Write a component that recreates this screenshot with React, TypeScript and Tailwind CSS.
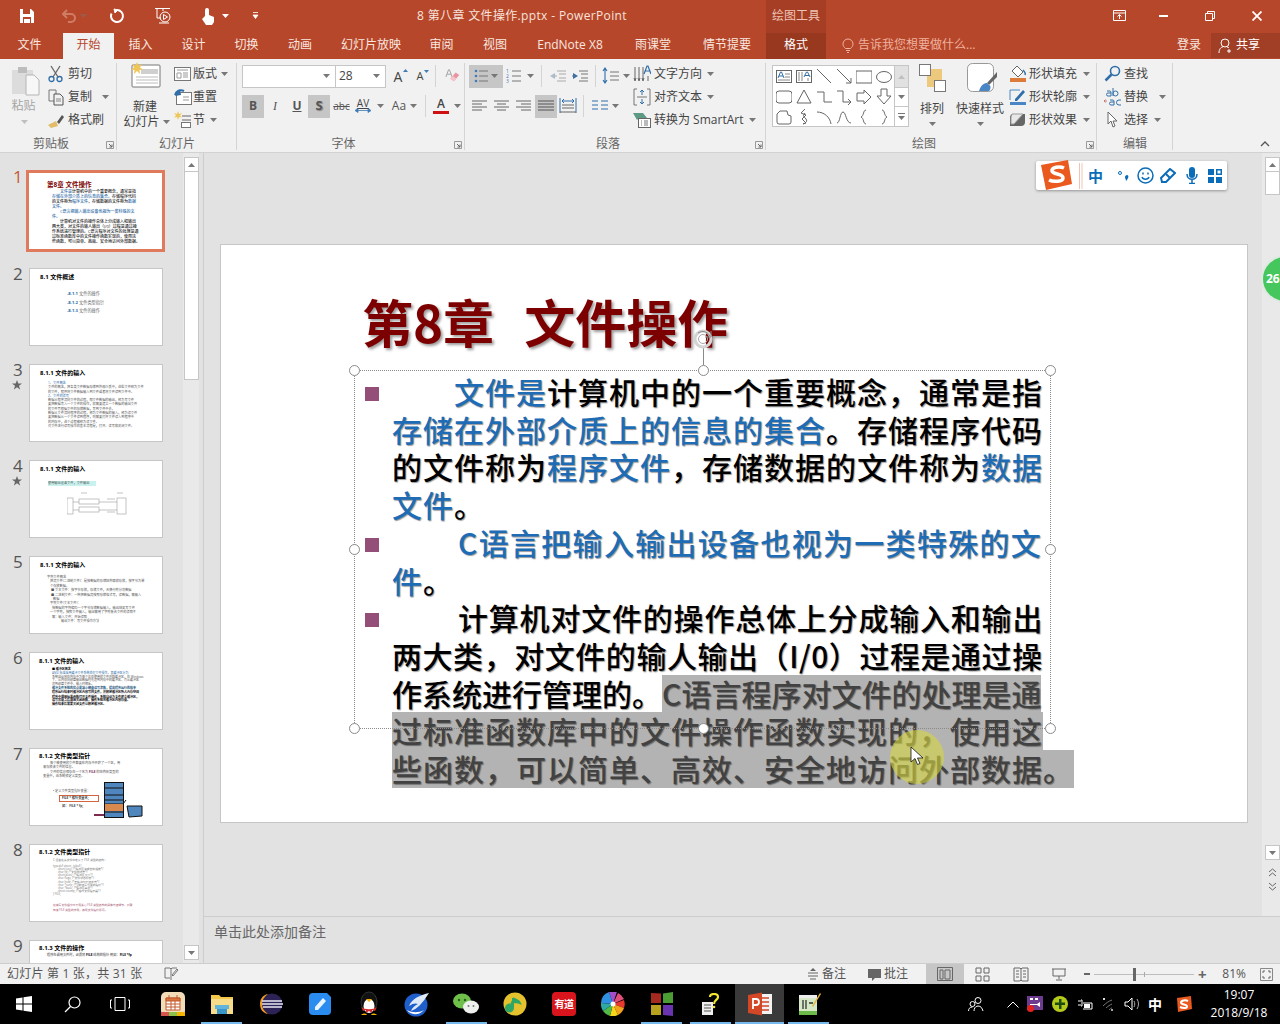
import type { ReactNode } from 'react';

const tabs = [
  { label: '插入', w: 'w-[53px]' },
  { label: '设计', w: 'w-[53px]' },
  { label: '切换', w: 'w-[53px]' },
  { label: '动画', w: 'w-[54px]' },
  { label: '幻灯片放映', w: 'w-[88px]' },
  { label: '审阅', w: 'w-[53px]' },
  { label: '视图', w: 'w-[54px]' },
  { label: 'EndNote X8', w: 'w-[96px]' },
  { label: '雨课堂', w: 'w-[70px]' },
  { label: '情节提要', w: 'w-[78px]' },
];

// small dropdown triangle used all over the ribbon
function Caret({ className = '' }: { className?: string }) {
  return (
    <svg width="7" height="4" viewBox="0 0 7 4" className={`shrink-0 ${className}`}>
      <path d="M0 0h7L3.5 4z" fill="#777" />
    </svg>
  );
}

function Launcher() {
  return (
    <svg width="8" height="8" viewBox="0 0 8 8" className="absolute right-[3px] bottom-[4px]">
      <path d="M.5 7.5V.5h7v7z" fill="none" stroke="#999" />
      <path d="M3 3l3 3M6 3.5V6H3.5" fill="none" stroke="#666" />
    </svg>
  );
}

function Group({ w, label, children, launcher }: { w: string; label: string; children: ReactNode; launcher?: boolean }) {
  return (
    <div className={`${w} h-[94px] shrink-0 flex flex-col relative`}>
      <div className="flex-1 flex min-h-0 pt-[3px]">{children}</div>
      <div className={`h-[19px] leading-[19px] text-center text-[12px] text-[#666] ${launcher ? 'pr-[15px]' : ''}`}>{label}</div>
      {launcher && <Launcher />}
      <div className="absolute right-0 top-[4px] bottom-[3px] w-px bg-[#d4d4d4]" />
    </div>
  );
}

function Row({ icon, text, caret, gap = 'gap-[3px]', caretClass = 'ml-[5px]' }: { icon: ReactNode; text: string; caret?: boolean; gap?: string; caretClass?: string }) {
  return (
    <div className={`h-[23px] flex items-center whitespace-nowrap text-[12px] text-[#444] ${gap}`}>
      <span className="w-[18px] h-[18px] flex items-center justify-center shrink-0">{icon}</span>
      <span>{text}</span>
      {caret && <Caret className={caretClass} />}
    </div>
  );
}

function TopIcon({ children, className = '' }: { children: ReactNode; className?: string }) {
  return <svg viewBox="0 0 18 18" width="18" height="18" fill="none" className={`shrink-0 ${className}`}>{children}</svg>;
}

function ClipboardGroup() {
  return (
    <Group w="w-[117px]" label="剪贴板" launcher>
      <div className="w-[47px] flex flex-col items-center pl-[2px] text-[12px] text-[#a6a6a6]">
        <svg width="30" height="32" viewBox="0 0 30 32" className="mt-[3px] ml-[2px]">
          <rect x="1" y="5" width="21" height="24" fill="#dcdcdc" />
          <rect x="7" y="2" width="9" height="6" fill="#bdbdbd" />
          <path d="M15 10h8l5 5v15H15z" fill="#f7f7f7" stroke="#b5b5b5" />
        </svg>
        <span className="leading-[16px] mt-[1px] -ml-[2px]">粘贴</span>
        <Caret className="mt-[6px] opacity-40" />
      </div>
      <div className="flex flex-col">
        <Row
          text="剪切"
          icon={
            <TopIcon>
              <circle cx="4.5" cy="14" r="2.5" stroke="#2f6ea8" strokeWidth="1.3" />
              <circle cx="12.5" cy="14" r="2.5" stroke="#2f6ea8" strokeWidth="1.3" />
              <path d="M6 12L13 1M11 12L4 1" stroke="#666" strokeWidth="1.3" />
            </TopIcon>
          }
        />
        <Row
          text="复制"
          caret
          caretClass="ml-[7px]"
          icon={
            <TopIcon>
              <path d="M2 2h7v11H2z" stroke="#777" />
              <path d="M7 6h6l3 3v8H7z" fill="#f1f1f1" stroke="#555" />
              <path d="M9 11h5M9 13h5" stroke="#888" />
            </TopIcon>
          }
        />
        <Row
          text="格式刷"
          icon={
            <TopIcon>
              <path d="M9 10L1 14l3 3 7-2z" fill="#e3bc69" />
              <path d="M10 11l5-7 2 2-5 7z" fill="#555" />
            </TopIcon>
          }
        />
      </div>
    </Group>
  );
}

function SlidesGroup() {
  return (
    <Group w="w-[120px]" label="幻灯片">
      <div className="w-[53px] flex flex-col items-center text-[12px] text-[#444] leading-[15px] pl-[3px]">
        <svg width="32" height="28" viewBox="0 0 32 28" className="-ml-[1px]">
          <rect x="3" y="3" width="28" height="22" rx="1" fill="#fff" stroke="#777" />
          <rect x="12" y="7" width="17" height="5" fill="#cfcfcf" />
          <path d="M7 15h22M7 18h22M7 21h22" stroke="#bbb" />
          <path d="M8 0l1.5 3.5L13 2l-2 3.5 3 2-3.500.5L11 12 8 9 5 12l.5-4L2 7.500l3-2L3 2l3.500 1.500z" fill="#efc65a" />
        </svg>
        <span className="mt-[9px]">新建</span>
        <span className="flex items-center whitespace-nowrap pl-[3px]">幻灯片<Caret className="ml-[3px]" /></span>
      </div>
      <div className="flex flex-col pl-[4px]">
        <Row
          text="版式"
          caret
          gap="gap-[1px]"
          caretClass="ml-[3px]"
          icon={
            <TopIcon>
              <rect x=".5" y="2.500" width="16" height="13" fill="#fff" stroke="#777" />
              <path d="M3 5h11M3 8h4v5H3zM9 8h5M9 10h5M9 12h5" stroke="#999" />
            </TopIcon>
          }
        />
        <Row
          text="重置"
          gap="gap-[1px]"
          icon={
            <TopIcon>
              <rect x="2.500" y="4.500" width="15" height="12" fill="#fff" stroke="#777" />
              <path d="M1 7c1-4 5-6 9-4" stroke="#2f6ea8" strokeWidth="2" />
              <path d="M6 1L1 8l6-1z" fill="#2f6ea8" />
              <path d="M9 9h6M9 12h6" stroke="#999" />
            </TopIcon>
          }
        />
        <Row
          text="节"
          caret
          gap="gap-[1px]"
          caretClass="ml-[4px]"
          icon={
            <TopIcon>
              <path d="M4 0l1 3 3-1-2 2.500 2 2L5 6l-1 3-1-3-3 .5 2-2L0 2l3 1z" fill="#efc65a" />
              <path d="M8 5h9M8 9h9" stroke="#666" />
              <rect x="7.500" y="11.500" width="9" height="5" fill="#fff" stroke="#777" />
            </TopIcon>
          }
        />
      </div>
    </Group>
  );
}

function FontGroup() {
  return (
    <Group w="w-[228px]" label="字体" launcher>
      <div className="pl-[5px] flex flex-col">
        <div className="h-[24px] mt-[2px] flex items-center">
          <div className="w-[94px] h-[23px] bg-white border border-[#c6c6c6] flex items-center justify-end pr-[5px]"><Caret /></div>
          <div className="w-[50px] h-[23px] bg-white border border-[#c6c6c6] border-l-0 flex items-center justify-between pl-[3px] pr-[5px] text-[12px] text-[#444]">28<Caret /></div>
          <span className="relative w-[22px] ml-[1px] text-center text-[14px] text-[#444]">A
            <svg width="5" height="3" viewBox="0 0 5 3" className="absolute right-[1px] top-[3px]"><path d="M0 3h5L2.500 0z" fill="#3f7cb5" /></svg>
          </span>
          <span className="relative w-[22px] text-center text-[11px] text-[#444] pt-[1px]">A
            <svg width="5" height="3" viewBox="0 0 5 3" className="absolute right-[2px] top-[3px]"><path d="M0 0h5L2.500 3z" fill="#3f7cb5" /></svg>
          </span>
          <div className="w-px h-[22px] bg-[#d4d4d4] ml-[4px]" />
          <svg width="16" height="18" viewBox="0 0 18 18" className="ml-[9px]">
            <path d="M1 10l3-8h1l3 8M2.500 7h4" fill="none" stroke="#999" />
            <path d="M6 12l6-7 4 3-6 7z" fill="#e9949f" />
            <path d="M6 12l3-3 4 3-3 3z" fill="#f3c4ca" />
          </svg>
        </div>
        <div className="h-[24px] mt-[6px] flex items-center text-[#555]">
          <span className="w-[22px] h-[23px] bg-[#c6c6c6] flex items-center justify-center text-[12px] font-bold">B</span>
          <span className="w-[22px] text-center text-[12px] italic font-['Liberation_Serif',serif]">I</span>
          <span className="w-[22px] text-center text-[12px] font-bold underline">U</span>
          <span className="w-[22px] h-[23px] bg-[#c6c6c6] flex items-center justify-center text-[13px] font-bold [text-shadow:1px_1px_1px_#888]">S</span>
          <span className="w-[22px] text-center text-[10px] line-through pl-[1px]">abc</span>
          <span className="w-[22px] flex flex-col items-center leading-[10px] text-[10px] text-[#444] -mt-[2px]">
            <span className="underline">AV</span>
            <svg width="16" height="5" viewBox="0 0 16 5"><path d="M0 2.500l3-2v4zM16 2.500l-3-2v4zM2 2.500h12" fill="#3f7cb5" stroke="#3f7cb5" strokeWidth=".8" /></svg>
          </span>
          <Caret className="ml-[3px]" />
          <span className="w-[24px] text-center text-[12px] ml-[3px]">Aa</span>
          <Caret className="-ml-[1px]" />
          <div className="w-px h-[22px] bg-[#d4d4d4] ml-[8px] mr-[7px]" />
          <span className="flex flex-col items-center w-[16px] leading-[12px] text-[12px] font-semibold text-[#444]">
            A
            <span className="w-[16px] h-[3px] bg-[#d01010] mt-[1px]" />
          </span>
          <Caret className="ml-[5px]" />
        </div>
      </div>
    </Group>
  );
}

function ListLine({ x, y, w = 9 }: { x: number; y: number; w?: number }) {
  return <path d={`M${x} ${y}h${w}`} stroke="#777" />;
}

function ParagraphGroup() {
  return (
    <Group w="w-[301px]" label="段落" launcher>
      <div className="w-[168px] shrink-0 flex flex-col pl-[4px]">
        <div className="h-[24px] mt-[2px] flex items-center">
          <span className="w-[34px] h-[23px] bg-[#c6c6c6] flex items-center pl-[4px] gap-[3px] shrink-0">
            <TopIcon>
              <circle cx="3" cy="4" r="1.300" fill="#3f7cb5" />
              <circle cx="3" cy="9" r="1.300" fill="#3f7cb5" />
              <circle cx="3" cy="14" r="1.300" fill="#3f7cb5" />
              <ListLine x={6} y={4} /><ListLine x={6} y={9} /><ListLine x={6} y={14} />
            </TopIcon>
            <Caret className="-ml-[3px]" />
          </span>
          <span className="ml-[3px]">
            <TopIcon>
              <text x="0" y="6" fontSize="5" fill="#3f7cb5">1</text><text x="0" y="11" fontSize="5" fill="#3f7cb5">2</text><text x="0" y="16" fontSize="5" fill="#3f7cb5">3</text>
              <ListLine x={6} y={4} /><ListLine x={6} y={9} /><ListLine x={6} y={14} />
            </TopIcon>
          </span>
          <Caret className="ml-[3px]" />
          <div className="w-px h-[22px] bg-[#d4d4d4] mx-[7px] shrink-0" />
          <TopIcon>
            <path d="M1 9l5-3v6z" fill="#aebccb" /><path d="M5 9h3M8 4h9M10 7h7M10 11h7M8 14h9" stroke="#aaa" />
          </TopIcon>
          <TopIcon className="ml-[4px]">
            <path d="M7 9L2 6v6z" fill="#2f6ea8" /><path d="M1 9h3M8 4h9M10 7h7M10 11h7M8 14h9" stroke="#777" />
          </TopIcon>
          <div className="w-px h-[22px] bg-[#d4d4d4] mx-[6px] shrink-0" />
          <TopIcon>
            <path d="M3 1v15M1 4l2-3 2 3M1 13l2 3 2-3" stroke="#2f6ea8" strokeWidth="1.100" />
            <path d="M8 5h9M8 9h9M8 13h9" stroke="#777" />
          </TopIcon>
          <Caret className="ml-[3px]" />
        </div>
        <div className="h-[24px] mt-[6px] flex items-center">
          {[
            'M1 4h15M1 7h10M1 10h15M1 13h10',
            'M1 4h15M4 7h9M1 10h15M4 13h9',
            'M1 4h15M6 7h10M1 10h15M6 13h10',
          ].map((d) => (
            <span key={d} className="w-[22px] flex items-center justify-center"><TopIcon><path d={d} stroke="#666" /></TopIcon></span>
          ))}
          <span className="w-[22px] h-[23px] bg-[#c6c6c6] flex items-center justify-center"><TopIcon><path d="M1 4h16M1 7h16M1 10h16M1 13h16" stroke="#555" /></TopIcon></span>
          <span className="w-[22px] flex items-center justify-center">
            <TopIcon><path d="M1 1v15M17 1v15M3 4h12M3 4l2-2M3 4l2 2M15 4l-2-2M15 4l-2 2" stroke="#2f6ea8" /><path d="M3 8h12M3 11h12M1 15h16" stroke="#666" /></TopIcon>
          </span>
          <div className="w-px h-[22px] bg-[#d4d4d4] ml-[4px] mr-[7px] shrink-0" />
          <TopIcon><path d="M1 4h6M1 8h6M1 12h6M10 4h7M10 8h7M10 12h7" stroke="#2f6ea8" /></TopIcon>
          <Caret className="ml-[3px]" />
        </div>
      </div>
      <div className="flex flex-col">
        <Row
          text="文字方向"
          caret
          caretClass="ml-[2px]"
          icon={
            <TopIcon>
              <path d="M2 2v13M6 2v13M10 2v13" stroke="#666" />
              <path d="M1 13l1 3 1-3M5 13l1 3 1-3M9 13l1 3 1-3" stroke="#666" />
              <path d="M11 9l3-8h1l3 8M12 6h5" stroke="#2f6ea8" strokeWidth="1.200" />
              <path d="M15 11v5" stroke="#666" />
            </TopIcon>
          }
        />
        <Row
          text="对齐文本"
          caret
          caretClass="ml-[2px]"
          icon={
            <TopIcon>
              <path d="M4 1H1v16h3M14 1h3v16h-3" stroke="#777" />
              <path d="M9 2v5M7 4l2-2 2 2M9 11v5M7 14l2 2 2-2" stroke="#2f6ea8" />
              <path d="M4 9h10" stroke="#777" />
            </TopIcon>
          }
        />
        <Row
          text="转换为 SmartArt"
          caret
          caretClass="ml-[3px]"
          icon={
            <TopIcon>
              <path d="M0 2h10l4 5H6L4 9z" fill="#5c9a84" />
              <rect x="5.500" y="7.500" width="12" height="9" fill="#fff" stroke="#666" />
              <path d="M8 10h1M8 12h1M8 14h1M11 10h4M11 12h4M11 14h4" stroke="#777" />
            </TopIcon>
          }
        />
      </div>
    </Group>
  );
}

const shapePaths = [
  'M4 6h12M4 9h12',
  '',
  'M1 1l14 14',
  'M1 1l14 14M15 10v5h-5',
  'M0 3h16v12H0z',
  '',
  'M3 3h10a3 3 0 013 3v6a3 3 0 01-3 3H3a3 3 0 01-3-3V6a3 3 0 013-3z',
  'M8 2l7 13H1z',
  'M1 4h7v10h8',
  'M1 3h6v11h8M12 11l3 3-3 3',
  'M1 5h7V2l7 7-7 7v-3H1z',
  'M5 1h6v7h4l-7 8-7-8h4z',
  'M1 6l3-3h7l1 4 3 1v6a2 2 0 01-2 2H3a2 2 0 01-2-2z',
  'M9 1L5 5l5 2-4 4 4 4-3 1c2-1 5-2 3-5S6 9 9 5',
  'M1 4c7 0 13 5 14 12',
  'M1 15c3 0 3-11 6-11s3 11 8 11',
  'M10 2C7 2 8 8 5 9c3 1 2 7 5 7',
  'M6 2c3 0 2 6 5 7-3 1-2 7-5 7',
];

function ShapeGallery() {
  return (
    <div className="w-[137px] h-[62px] mt-[3px] ml-[6px] bg-white border border-[#c6c6c6] flex shrink-0">
      <div className="w-[122px] grid grid-cols-6 pt-[1px] pl-[1px]">
        {shapePaths.map((d, i) => (
          <span key={i} className="w-[20px] h-[20px] flex items-center justify-center">
            <svg width="16" height="18" viewBox="0 0 16 18" fill="none">
              {i === 0 && <rect x=".5" y="2.500" width="15" height="12" stroke="#666" />}
              {i === 0 && <path d="M2 10l2.500-6h1L8 10M3 8h4" stroke="#2f6ea8" />}
              {i === 0 && <path d="M9 6h5M9 9h5M2 12h12" stroke="#888" />}
              {i === 1 && <rect x=".5" y="2.500" width="15" height="12" stroke="#666" />}
              {i === 1 && <path d="M3 4v9M6 4v9M12 10v3" stroke="#888" />}
              {i === 1 && <path d="M8 9l2.500-5h1L14 9M9 7.500h4" stroke="#2f6ea8" />}
              {i === 5 && <ellipse cx="8" cy="9" rx="7.500" ry="5.500" stroke="#666" />}
              {i > 1 && d && <path d={d} stroke="#666" />}
            </svg>
          </span>
        ))}
      </div>
      <div className="w-[14px] ml-auto border-l border-[#c6c6c6] flex flex-col">
        <span className="h-[21px] bg-[#e1e1e1] flex items-center justify-center"><Caret className="rotate-180 opacity-30" /></span>
        <span className="h-[20px] border-y border-[#c6c6c6] flex items-center justify-center"><Caret /></span>
        <span className="flex-1 flex flex-col items-center justify-center gap-[2px]"><span className="w-[7px] h-px bg-[#777]" /><Caret /></span>
      </div>
    </div>
  );
}

function DrawingGroup() {
  return (
    <Group w="w-[331px]" label="绘图" launcher>
      <ShapeGallery />
      <div className="w-[38px] flex flex-col items-center text-[12px] text-[#444] ml-[4px]">
        <svg width="27" height="28" viewBox="0 0 27 28" className="mt-[2px]">
          <rect x="8" y="5" width="15" height="18" fill="#ecc97c" />
          <rect x=".5" y=".500" width="11" height="11" fill="#fff" stroke="#777" />
          <rect x="15.500" y="16.500" width="11" height="11" fill="#fff" stroke="#777" />
        </svg>
        <span className="mt-[9px] leading-[15px]">排列</span>
        <Caret className="mt-[6px]" />
      </div>
      <div className="w-[48px] flex flex-col items-center text-[12px] text-[#444] ml-[5px]">
        <svg width="30" height="30" viewBox="0 0 30 30" className="mt-[1px] ml-[4px]">
          <rect x=".5" y=".500" width="26" height="28" rx="5" fill="#fff" stroke="#999" />
          <path d="M30 9L20 20l2 2L30 14z" fill="#666" />
          <path d="M20 20c-3 0-6 2-8 8h10c2-2 2-6 0-6z" fill="#4a86c5" />
        </svg>
        <span className="mt-[8px] leading-[15px] whitespace-nowrap">快速样式</span>
        <Caret className="mt-[6px]" />
      </div>
      <div className="flex flex-col pl-[5px]">
        <Row
          text="形状填充"
          caret
          gap="gap-[2px]"
          caretClass="ml-[4px]"
          icon={
            <TopIcon>
              <path d="M8 1l6 6-5 5-6-6z" fill="#fff" stroke="#666" />
              <path d="M14 5c1 1 3 3 2 5" stroke="#2f6ea8" strokeWidth="1.500" />
              <rect x="1" y="13" width="16" height="4" fill="#dd7b3b" />
            </TopIcon>
          }
        />
        <Row
          text="形状轮廓"
          caret
          gap="gap-[2px]"
          caretClass="ml-[4px]"
          icon={
            <TopIcon>
              <path d="M1 12V2h10" stroke="#4a86c5" />
              <path d="M6 11l8-9 2 2-8 9H6z" fill="#2f6ea8" />
              <rect x="1" y="14" width="16" height="3" fill="#4a86c5" />
            </TopIcon>
          }
        />
        <Row
          text="形状效果"
          caret
          gap="gap-[2px]"
          caretClass="ml-[4px]"
          icon={
            <TopIcon>
              <path d="M3 3h13v8a4 4 0 01-4 4H1V7a4 4 0 012-4z" fill="#666" />
              <path d="M3 3h11L5 13H2V6z" fill="#e8e8e8" stroke="#999" />
            </TopIcon>
          }
        />
      </div>
    </Group>
  );
}

function EditGroup() {
  return (
    <Group w="w-[76px]" label="编辑">
      <div className="flex flex-col pl-[7px]">
        <Row
          text="查找"
          gap="gap-[2px]"
          icon={
            <TopIcon>
              <circle cx="11" cy="6" r="4.500" stroke="#2f6ea8" strokeWidth="1.600" />
              <path d="M7.500 9.500L1.500 15.500" stroke="#2f6ea8" strokeWidth="2.500" />
            </TopIcon>
          }
        />
        <Row
          text="替换"
          caret
          gap="gap-[2px]"
          caretClass="ml-[9px]"
          icon={
            <TopIcon>
              <path d="M3 3h3a1.500 1.500 0 011 1v4H4a1.500 1.500 0 010-3h3M9 0v8M9 5.500a2.500 2.500 0 115 0 2.500 2.500 0 01-5 0" stroke="#2f6ea8" />
              <path d="M6 12h3a1.500 1.500 0 011 1v4H7a1.500 1.500 0 010-3h3M17 12h-2a2.500 2.500 0 000 5h2" stroke="#2f6ea8" />
              <path d="M0 13h3M0 13l1.500-1.500M0 13l1.500 1.500" stroke="#c77" />
            </TopIcon>
          }
        />
        <Row
          text="选择"
          caret
          gap="gap-[2px]"
          caretClass="ml-[4px]"
          icon={
            <TopIcon>
              <path d="M4 1v12l3-3 2 6 2-1-2-5h4z" fill="#fff" stroke="#666" />
            </TopIcon>
          }
        />
      </div>
    </Group>
  );
}

function Ribbon() {
  return (
    <div className="h-[94px] bg-[#f1f1f1] border-b border-[#d2d2d2] flex relative">
      <ClipboardGroup />
      <SlidesGroup />
      <FontGroup />
      <ParagraphGroup />
      <DrawingGroup />
      <EditGroup />
      <svg width="10" height="6" viewBox="0 0 10 6" className="absolute right-[10px] bottom-[5px]"><path d="M1 5l4-4 4 4" fill="none" stroke="#555" strokeWidth="1.300" /></svg>
    </div>
  );
}

function TitleBar() {
  return (
    <div className="h-[33px] bg-[#b7472a] flex items-stretch text-[12px] text-[#f6e3dc]">
      <div className="w-[417px] flex items-center pl-[19px] pb-[2px] shrink-0">
        <svg width="16" height="16" viewBox="0 0 16 16"><path d="M1 1h11l3 3v11H1z" fill="#fff" /><path d="M4 1h7v5H4zM4 9h8v6H4z" fill="#b7472a" /><path d="M5 11h6v4H5z" fill="#fff" /></svg>
        <svg width="16" height="14" viewBox="0 0 16 14" className="ml-[27px] opacity-40" fill="none"><path d="M5 1L1 5l4 4M1 5h8a4 4 0 010 8H6" stroke="#f3cdbf" strokeWidth="2" /></svg>
        <Caret className="ml-[2px] opacity-40" />
        <svg width="16" height="16" viewBox="0 0 16 16" className="ml-[22px]" fill="none"><path d="M8 2a6 6 0 11-5.500 3.500" stroke="#fff" strokeWidth="2" /><path d="M5 1l4 1-3 3z" fill="#fff" stroke="#fff" /></svg>
        <svg width="18" height="18" viewBox="0 0 18 18" className="ml-[29px]" fill="none" stroke="#fff"><path d="M1 1.500h15M3 2v9h4M9 1v3" /><circle cx="11" cy="10" r="5" /><path d="M9.500 7.500l4 2.500-4 2.500zM5 16h10" /></svg>
        <svg width="16" height="18" viewBox="0 0 16 18" className="ml-[28px]"><path d="M5 9V3a2 2 0 014 0v5l5 2v5l-2 3H6l-4-6z" fill="#fff" /></svg>
        <Caret className="ml-[6px] [&>path]:fill-white" />
        <svg width="7" height="7" viewBox="0 0 7 7" className="ml-[23px]"><path d="M1 .500h5M1 3h5L3.500 6.500z" fill="#fff" stroke="#fff" strokeWidth=".8" /></svg>
      </div>
      <div className="w-[349px] shrink-0 flex items-center pb-[2px] tracking-[.35px]">8 第八章 文件操作.pptx - PowerPoint</div>
      <div className="w-[60px] shrink-0 bg-[#a53e24] flex items-center justify-center pb-[2px] text-[#eec3b4]">绘图工具</div>
      <div className="flex-1 flex items-center justify-end pb-[2px]">
        <svg width="13" height="12" viewBox="0 0 13 12" className="mr-[33px]" fill="none" stroke="#fff"><path d="M.5 .500h12v10H.5zM.5 3h12" /><path d="M6.500 9V4.500M4.500 6.500l2-2 2 2" /></svg>
        <span className="w-[9px] h-[2px] bg-white mr-[37px]" />
        <svg width="10" height="10" viewBox="0 0 10 10" className="mr-[37px]" fill="none" stroke="#fff"><path d="M2.500 2.500v-2h7v7h-2M.5 2.500h7v7h-7z" /></svg>
        <svg width="10" height="10" viewBox="0 0 10 10" className="mr-[18px]"><path d="M.5 .500l9 9M9.500 .500l-9 9" stroke="#fff" strokeWidth="1.800" /></svg>
      </div>
    </div>
  );
}

function TabBar() {
  return (
    <div className="h-[26px] bg-[#b7472a] flex items-stretch text-[12px] text-[#f8e7e0]">
      <div className="w-[63px] flex items-center justify-center pb-[2px] pr-[4px]">文件</div>
      <div className="w-[51px] bg-[#f1f1f1] text-[#b7472a] flex items-center justify-center pb-[2px]">开始</div>
      {tabs.map((t) => (
        <div key={t.label} className={`${t.w} flex items-center justify-center pb-[2px]`}>{t.label}</div>
      ))}
      <div className="w-[60px] bg-[#97381f] text-white flex items-center justify-center pb-[2px]">格式</div>
      <div className="flex-1 flex items-center pl-[16px] pb-[2px] text-[#eeb29f] gap-[4px]">
        <svg width="12" height="15" viewBox="0 0 12 15" fill="none" stroke="#eeb29f"><path d="M3.500 10.500C2 9 1 8 1 6a5 5 0 0110 0c0 2-1 3-2.500 4.500zM4 12.500h4M5 14.500h2" /></svg>
        告诉我您想要做什么...
      </div>
      <div className="w-[43px] flex items-center pl-[9px] pb-[2px]">登录</div>
      <div className="w-[69px] h-[25px] bg-[#a03f26] flex items-center pl-[7px] gap-[3px] text-white">
        <svg width="15" height="16" viewBox="0 0 15 16" fill="none" stroke="#fff"><circle cx="7" cy="5" r="4" /><path d="M1 15c0-4 2-6 4-6M9 9c1 0 1.500.5 2 1M11 11v4M9 13h4" /></svg>
        <span className="-mt-[2px]">共享</span>
      </div>
    </div>
  );
}

function ThumbTitle({ children }: { children: ReactNode }) {
  return <div className="text-[6px] leading-[7px] font-bold text-black whitespace-nowrap">{children}</div>;
}

function Tiny({ children, className = '' }: { children: ReactNode; className?: string }) {
  return <div className={`text-[4.200px] leading-[5px] text-[#666] whitespace-nowrap ${className}`}>{children}</div>;
}

function ThumbOne() {
  return (
    <div className="pl-[18px] pt-[7px]">
      <div className="text-[6.500px] leading-[9px] font-bold text-[#7d0000] whitespace-nowrap">第8章  文件操作</div>
      <div className="ml-[5px] text-[4px] leading-[5px] font-medium text-[#222] whitespace-nowrap">
        <div className="pl-[8px]"><span className="text-[#2f6ea8]">文件是</span>计算机中的一个重要概念，通常是指</div>
        <div className="text-[#2f6ea8]">存储在外部介质上的信息的集合。<span className="text-[#222]">存储程序代码</span></div>
        <div>的文件称为<span className="text-[#2f6ea8]">程序文件</span>，存储数据的文件称为<span className="text-[#2f6ea8]">数据</span></div>
        <div className="text-[#2f6ea8]">文件。</div>
        <div className="pl-[8px] text-[#2f6ea8]">C语言把输入输出设备也视为一类特殊的文</div>
        <div className="text-[#2f6ea8]">件。</div>
        <div className="pl-[8px]">计算机对文件的操作总体上分成输入和输出</div>
        <div>两大类，对文件的输人输出（I/0）过程是通过操</div>
        <div>作系统进行管理的。C语言程序对文件的处理是通</div>
        <div>过标准函数库中的文件操作函数实现的，使用这</div>
        <div>些函数，可以简单、高效、安全地访问外部数据。</div>
      </div>
    </div>
  );
}

function ThumbTwo() {
  return (
    <div className="pl-[10px] pt-[5px]">
      <ThumbTitle>8.1 文件概述</ThumbTitle>
      <div className="pl-[27px] pt-[10px] flex flex-col gap-[3.500px]">
        <Tiny><span className="text-[#2f6ea8] font-bold">-8.1.1</span> 文件的操作</Tiny>
        <Tiny><span className="text-[#2f6ea8] font-bold">-8.1.2</span> 文件类型指针</Tiny>
        <Tiny><span className="text-[#2f6ea8] font-bold">-8.1.3</span> 文件的操作</Tiny>
      </div>
    </div>
  );
}

function ThumbThree() {
  return (
    <div className="pl-[10px] pt-[5px]">
      <ThumbTitle>8.1.1  文件的输入</ThumbTitle>
      <div className="pl-[8px] pt-[4px] text-[3.200px] leading-[4.300px] text-[#555] whitespace-nowrap">
        <div className="text-[#2f6ea8]">1、文件概念</div>
        <div>文件的概念，把各类文件数据存储到外部介质中，这些文件称为文件</div>
        <div>的文件，程序将文件数据输入到文件或者将文件读到文件中。</div>
        <div className="text-[#2f6ea8]">2、文件的读写</div>
        <div>数据从程序流向文件的过程，即文件数据的输出，称为写文件</div>
        <div>要把数据写入一个文件的操作，就需要建立一个数据的输出文件</div>
        <div>的文件再根据文件的存储数据，写到文件中去。</div>
        <div>数据从文件流向程序的过程，称为文件数据的输入，称为读文件</div>
        <div>要把数据从一个文件读到程序，则需要打开文件读入到程序中</div>
        <div>的内存中，这个过程被称为读文件。</div>
        <div>对文件进行读写操作的基本流程是，打开、读写和关闭文件。</div>
      </div>
    </div>
  );
}

function ThumbFour() {
  return (
    <div className="pl-[10px] pt-[5px] relative h-full">
      <ThumbTitle>8.1.1  文件的输入</ThumbTitle>
      <div className="mt-[8px] ml-[8px] w-[48px] text-[3.200px] leading-[5px] bg-[#c9f2ee] text-[#555] whitespace-nowrap overflow-hidden">使用输出设备文件，文件输出</div>
      <svg width="70" height="32" viewBox="0 0 70 32" className="absolute left-[37px] top-[31px]" fill="none" stroke="#aaa" strokeWidth=".7">
        <rect x="0" y="6" width="6" height="16" />
        <rect x="12" y="7" width="20" height="5" />
        <rect x="12" y="15" width="20" height="5" />
        <rect x="50" y="6" width="9" height="16" />
        <path d="M6 10h6M6 18h6M32 10h18M32 18h18M14 1h6M50 1h6M40 7h8M40 20h8" />
      </svg>
    </div>
  );
}

function ThumbFive() {
  return (
    <div className="pl-[10px] pt-[5px]">
      <ThumbTitle>8.1.1  文件的输入</ThumbTitle>
      <div className="pl-[7px] pt-[6px] text-[3.200px] leading-[4.400px] text-[#555] whitespace-nowrap">
        <div>字符文件概念</div>
        <div className="pl-[3px]">把流文件(二进制文件)：是按数据的存储结构原样存放，按字节为单</div>
        <div className="pl-[3px]">个存放数据。</div>
        <div className="pl-[4px]">■ 文本文件：按字节存放，存储文件，无换行符分割数据</div>
        <div className="pl-[4px]">■ 二进制文件：一种把数据流按照存储格式写，读数据，需输入</div>
        <div className="pl-[6px]">数据</div>
        <div className="pl-[3px]">字符文件(文本文件)：</div>
        <div className="pl-[5px]">按数据的字符编码一个字节存储数据输入，输出结果写文件</div>
        <div className="pl-[3px]">一个字符，按照文件输入，输出需用了字符集合文件的读取不</div>
        <div className="pl-[5px]">需：输入文件：开始读取</div>
        <div className="pl-[14px]">输出文件：写文件操作方法</div>
      </div>
    </div>
  );
}

function ThumbSix() {
  return (
    <div className="pl-[9px] pt-[5px]">
      <ThumbTitle>8.1.1  文件的输入</ThumbTitle>
      <div className="pl-[13px] pt-[3px] text-[3px] leading-[3.800px] text-[#555] whitespace-nowrap">
        <div className="font-bold text-black">■ 缓冲区概念</div>
        <div className="text-[#2f6ea8]">ANSI 标准采用缓冲文件系统处理文件操作，其缓冲区分为</div>
        <div>系统自动地在内存中为每个正在使用的文件开辟缓冲区，在 Windows</div>
        <div>下，从内存向磁盘输出数据时先送到内存中的缓冲区，再从缓冲区</div>
        <div>送到磁盘文件中，输入时相反。</div>
        <div className="font-bold text-[#0e4b72]">缓冲文件系统的优点是减少磁盘读写次数，提高程序运行的效率</div>
        <div className="font-bold text-black">程序运行结束时缓冲区内容写回文件，并释放缓冲区所占内存空间</div>
        <div className="font-bold text-black mt-[1px]">程序中调用标准函数打开文件操作，系统自动为文件建立缓冲区，</div>
        <div className="font-bold text-black">读写完成之后调用关闭函数，操作系统将缓冲区内容存盘。</div>
        <div className="font-bold text-black">操作结束后需要关闭文件以释放缓冲区。</div>
      </div>
    </div>
  );
}

function ThumbSeven() {
  return (
    <div className="pl-[9px] pt-[4px] relative h-full">
      <ThumbTitle>8.1.2  文件类型指针</ThumbTitle>
      <div className="pl-[4px] pt-[1px] text-[3.200px] leading-[4.400px] text-[#555] whitespace-nowrap">
        <div className="pl-[7px]">每个被使用的文件都要在内存中开辟了一个区，用</div>
        <div>来存放该文件的信息。</div>
        <div className="pl-[7px]">文件的信息保存在一个名为 <b className="text-[#7d2a4c]">FILE</b> 的结构体类型的</div>
        <div>变量中，由系统预定义类型。</div>
      </div>
      <div className="absolute left-[23px] top-[40px] text-[3.200px] leading-[4px] text-[#555] whitespace-nowrap">• 定义文件类型指针变量：</div>
      <div className="absolute left-[29px] top-[46px] w-[40px] h-[7px] border border-[#d0653f] text-[3.200px] leading-[5px] text-[#333] pl-[2px] font-bold whitespace-nowrap">FILE * 指针变量名;</div>
      <div className="absolute left-[32px] top-[55px] text-[3.200px] leading-[4px] text-[#444] font-bold whitespace-nowrap">如：  FILE * fp;</div>
      <svg width="50" height="38" viewBox="0 0 50 38" className="absolute left-[74px] top-[33px]">
        <rect x=".5" y=".500" width="19" height="35" fill="#4f86bd" stroke="#111" />
        <path d="M0 6h20M0 13h20M0 18h20M0 22h20M0 30h20" stroke="#111" />
        <rect x="1" y="22" width="18" height="7" fill="#d88a4e" />
        <path d="M23 24h15v10l-13 1z" fill="#4f86bd" stroke="#111" />
        <path d="M19 22l3-4" stroke="#111" />
      </svg>
      <div className="absolute left-[64px] top-[65px] w-[10px] h-[2px] bg-[#7d2a4c]" />
    </div>
  );
}

function ThumbEight() {
  return (
    <div className="pl-[9px] pt-[4px]">
      <ThumbTitle>8.1.2  文件类型指针</ThumbTitle>
      <div className="pl-[14px] pt-[3px] text-[2.800px] leading-[3.100px] text-[#777] whitespace-nowrap">
        <div>C 语言在头文件中定义了 FILE 类型的结构：</div>
        <div className="mt-[3px]">typedef struct _iobuf {'{'}</div>
        <div className="pl-[5px]">short level;   /*缓冲区满或空的程度*/</div>
        <div className="pl-[5px]">char fd;       /*文件描述符*/</div>
        <div className="pl-[5px]">short bsize;   /*缓冲区大小*/</div>
        <div className="pl-[5px]">char flags;    /*文件状态标志*/</div>
        <div className="pl-[5px]">char hold;     /*无缓冲时不读字符*/</div>
        <div className="pl-[5px]">char *curp;    /*当前读写位置的指针*/</div>
        <div className="pl-[5px]">char *base;    /*缓冲区基址*/</div>
        <div className="pl-[5px]">short istemp;  /*临时文件指示器*/</div>
        <div>{'}'} FILE;</div>
        <div className="mt-[7px] leading-[5px] text-[#a8566f]">在编写文件程序时不用关心 FILE 类型结构的具体内容细节，只需</div>
        <div className="leading-[5px] text-[#a8566f]">知道 FILE 类型的作用，使用文件指针即可。</div>
      </div>
    </div>
  );
}

function ThumbNine() {
  return (
    <div className="pl-[9px] pt-[4px]">
      <ThumbTitle>8.1.3  文件的操作</ThumbTitle>
      <div className="pl-[8px] pt-[1px] text-[3.200px] leading-[4px] text-[#555] font-medium whitespace-nowrap">
        程序在调用文件时，必须将 <b className="text-black">FILE</b> 结构的指针 例如：<b className="text-black">FILE *fp</b>
      </div>
    </div>
  );
}

const thumbs: { n: number; star?: boolean; body: ReactNode }[] = [
  { n: 2, body: <ThumbTwo /> },
  { n: 3, star: true, body: <ThumbThree /> },
  { n: 4, star: true, body: <ThumbFour /> },
  { n: 5, body: <ThumbFive /> },
  { n: 6, body: <ThumbSix /> },
  { n: 7, body: <ThumbSeven /> },
  { n: 8, body: <ThumbEight /> },
  { n: 9, body: <ThumbNine /> },
];

function Star() {
  return (
    <svg width="10" height="10" viewBox="0 0 10 10">
      <path d="M5 0l1.300 3.500H10L7 5.700 8.100 9.500 5 7.300 1.900 9.500 3 5.700 0 3.500h3.700z" fill="#666" />
    </svg>
  );
}

function ScrollButton({ down, className = '' }: { down?: boolean; className?: string }) {
  return (
    <div className={`w-[15px] h-[15px] bg-white border border-[#c6c6c6] flex items-center justify-center shrink-0 ${className}`}>
      <Caret className={down ? '' : 'rotate-180'} />
    </div>
  );
}

function ThumbPanel() {
  return (
    <div className="w-[204px] shrink-0 flex border-r border-[#cdcdcd] overflow-hidden">
      <div className="w-[183px] shrink-0 overflow-hidden pt-[17px]">
        <div className="flex h-[98px]">
          <div className="w-[26px] text-[17px] leading-[20px] text-[#c8593a] pl-[13px] -mt-[3px]">1</div>
          <div className="w-[139px] h-[82px] border-[3px] border-[#e07a5c] bg-white shrink-0 overflow-hidden">
            <ThumbOne />
          </div>
        </div>
        {thumbs.map((t) => (
          <div key={t.n} className="flex h-[96px] pl-[13px]">
            <div className="w-[16px] shrink-0 flex flex-col -mt-[4px]">
              <span className="text-[17px] leading-[20px] text-[#555]">{t.n}</span>
              {t.star && <span className="-ml-[1px]"><Star /></span>}
            </div>
            <div className="w-[134px] h-[78px] bg-white border border-[#c6c6c6] overflow-hidden shrink-0">{t.body}</div>
          </div>
        ))}
      </div>
      <div className="w-[16px] bg-[#e9e9e9] flex flex-col pt-[4px] items-center">
        <ScrollButton />
        <div className="w-[15px] h-[208px] bg-white border border-[#c6c6c6] border-t-0 shrink-0" />
        <div className="flex-1" />
        <ScrollButton down className="mb-[3px]" />
      </div>
    </div>
  );
}

const bodyFont = "font-['Noto_Sans_CJK_SC','Liberation_Sans',sans-serif] font-medium text-[30px] leading-[37.700px] tracking-[1px] [text-shadow:1px_1px_1px_rgba(0,0,0,.4)]";

function Blue({ children }: { children: ReactNode }) {
  return <span className="text-[#1d6cb5]">{children}</span>;
}

function Sel({ children }: { children: ReactNode }) {
  return <span className="inline-block h-[37.700px] align-top bg-[#b3b3b3] text-[#424242]">{children}</span>;
}

function Bullet() {
  return <span className="absolute -left-[27px] top-[14px] w-[14px] h-[14px] bg-[#944f78]" />;
}

function SlideBody() {
  return (
    <div className={`${bodyFont} text-black ml-[171px] mt-[18px] whitespace-nowrap`}>
      <div className="relative pl-[62px]"><Bullet /><Blue>文件是</Blue>计算机中的一个重要概念，通常是指</div>
      <div><Blue>存储在外部介质上的信息的集合</Blue>。存储程序代码</div>
      <div>的文件称为<Blue>程序文件</Blue>，存储数据的文件称为<Blue>数据</Blue></div>
      <div><Blue>文件</Blue>。</div>
      <div className="relative pl-[66px] tracking-[1.300px]"><Bullet /><Blue>C语言把输入输出设备也视为一类特殊的文</Blue></div>
      <div><Blue>件</Blue>。</div>
      <div className="relative pl-[66px] tracking-[.8px]"><Bullet />计算机对文件的操作总体上分成输入和输出</div>
      <div className="tracking-[.55px]">两大类，对文件的输人输出（I/0）过程是通过操</div>
      <div className="tracking-[0px]">作系统进行管理的。<Sel>C语言程序对文件的处理是通</Sel></div>
      <div><Sel>过标准函数库中的文件操作函数实现的，使用这</Sel></div>
      <div><Sel>些函数，可以简单、高效、安全地访问外部数据。</Sel></div>
    </div>
  );
}

function Handle({ className }: { className: string }) {
  return <span className={`absolute w-[11px] h-[11px] rounded-full bg-white border-[1.500px] border-[#8a8a8a] ${className}`} />;
}

function SelectionBox() {
  return (
    <div className="absolute left-[133px] top-[125px] w-[697px] h-[359px] border border-dotted border-[#8a8a8a]">
      <Handle className="-left-[6px] -top-[6px]" />
      <Handle className="left-[343px] -top-[6px]" />
      <Handle className="-right-[6px] -top-[6px]" />
      <Handle className="-left-[6px] top-[173px]" />
      <Handle className="-right-[6px] top-[173px]" />
      <Handle className="-left-[6px] -bottom-[6px]" />
      <Handle className="left-[343px] -bottom-[6px]" />
      <Handle className="-right-[6px] -bottom-[6px]" />
      <span className="absolute left-[348px] -top-[24px] w-px h-[18px] bg-[#8a8a8a]" />
      <svg width="22" height="22" viewBox="0 0 22 22" className="absolute left-[338px] -top-[43px]" fill="none">
        <circle cx="10" cy="11" r="8" stroke="#d4d4d4" strokeWidth="3" />
        <circle cx="10" cy="11" r="4.500" stroke="#a9a9a9" />
        <path d="M17 8a8 8 0 00-12-3" stroke="#8a8a8a" />
        <path d="M18 3v6h-6" stroke="#8a8a8a" />
      </svg>
    </div>
  );
}

function Slide() {
  return (
    <div className="w-[1028px] h-[579px] ml-[16px] bg-white border border-[#c6c6c6] shrink-0 relative">
      <div className="font-['Noto_Sans_CJK_SC','Liberation_Sans',sans-serif] font-bold text-[51px] leading-[68px] text-[#7d0000] pl-[141px] pt-[42px] whitespace-pre [text-shadow:2px_2px_3px_rgba(0,0,0,.4)]">
        第8章  <span className="ml-[7px]">文件操作</span>
      </div>
      <SlideBody />
      <SelectionBox />
      <div className="absolute left-[669px] top-[485px] w-[54px] h-[54px] rounded-full bg-[#d6d640]/60" />
      <svg width="14" height="20" viewBox="0 0 14 20" className="absolute left-[689px] top-[501px]">
        <path d="M1 1v15l4-3.500 2.500 6 2.500-1-2.500-5.500H13z" fill="#fff" stroke="#111" strokeWidth=".8" />
      </svg>
    </div>
  );
}

function RightScroll() {
  return (
    <div className="w-[18px] shrink-0 bg-[#e9e9e9] flex flex-col items-center pt-[4px] pl-[2px]">
      <ScrollButton />
      <div className="w-[15px] h-[23px] bg-white border border-[#c6c6c6] border-t-0 shrink-0" />
      <div className="flex-1" />
      <ScrollButton down />
      <svg width="9" height="9" viewBox="0 0 9 9" className="mt-[8px]"><path d="M1 4l3.500-3L8 4M1 8l3.500-3L8 8" fill="none" stroke="#666" /></svg>
      <svg width="9" height="9" viewBox="0 0 9 9" className="mt-[5px] mb-[25px]"><path d="M1 1l3.500 3L8 1M1 5l3.500 3L8 5" fill="none" stroke="#666" /></svg>
    </div>
  );
}

function ImeBar() {
  return (
    <div className="absolute left-[832px] top-[8px] w-[191px] h-[29px] bg-white rounded-[2px] shadow-[0_1px_3px_rgba(0,0,0,.35)] flex items-center text-[#0b6cb8]">
      <svg width="32" height="30" viewBox="0 0 32 30" className="ml-[5px] -mt-[2px] shrink-0">
        <path d="M0 5L27 0l4 24-26 6z" fill="#ea5a1f" />
        <path d="M23 8c-4-2-13-1-12 3 1 4 11 2 11 7 0 4-10 4-14 2" fill="none" stroke="#fff" strokeWidth="3.500" />
      </svg>
      <span className="w-px h-[26px] bg-[#f2c3b0] ml-[6px]" />
      <span className="w-[2px] h-[26px] ml-[1px] bg-[#f8e3da]" />
      <span className="text-[15px] font-bold ml-[5px] leading-[20px]">中</span>
      <svg width="14" height="12" viewBox="0 0 14 12" className="ml-[14px]"><circle cx="3" cy="3" r="1.500" fill="none" stroke="#0b6cb8" /><path d="M10 5c2 0 2 3-1 6 0-2-1-2-1-4 0-1 1-2 2-2z" fill="#0b6cb8" /></svg>
      <svg width="17" height="17" viewBox="0 0 17 17" className="ml-[6px]" fill="none" stroke="#0b6cb8" strokeWidth="1.500"><circle cx="8.500" cy="8.500" r="7.500" /><path d="M5 10c1 3 6 3 7 0" /><path d="M6 5.500v2M11 5.500v2" /></svg>
      <svg width="16" height="16" viewBox="0 0 16 16" className="ml-[6px]" fill="none" stroke="#0b6cb8" strokeWidth="2"><path d="M1 10l9-9 5 4-9 9H2z" /><path d="M6 6l4 4" /></svg>
      <svg width="12" height="17" viewBox="0 0 12 17" className="ml-[10px]"><rect x="3" y="0" width="6" height="11" rx="3" fill="#0b6cb8" /><path d="M1 7c0 7 10 7 10 0M6 12v4M3 16.500h6" fill="none" stroke="#0b6cb8" strokeWidth="1.500" /></svg>
      <svg width="14" height="14" viewBox="0 0 14 14" className="ml-[10px]" fill="#0b6cb8"><rect width="6" height="6" /><rect x="8.750" y=".750" width="4.500" height="4.500" fill="none" stroke="#0b6cb8" strokeWidth="1.500" /><rect y="8" width="6" height="6" /><rect x="8" y="8" width="6" height="6" /></svg>
    </div>
  );
}

function EditorArea() {
  return (
    <div className="flex-1 flex flex-col min-w-0 relative">
      <div className="flex-1 flex overflow-hidden relative">
        <div className="flex-1 pt-[91px]">
          <Slide />
        </div>
        <RightScroll />
        <ImeBar />
        <div className="absolute left-[1057px] top-[102px] w-[48px] h-[48px] rounded-full bg-[#46c75e] border-[2px] border-[#dfe9e1] text-white text-[12px] font-bold leading-[44px] pl-[3px]">26</div>
      </div>
      <div className="h-[47px] border-t border-[#cdcdcd] pl-[10px] pt-[5px] text-[14px] text-[#666] leading-[20px]">单击此处添加备注</div>
    </div>
  );
}

function ViewIcon({ d, active }: { d: string; active?: boolean }) {
  return (
    <span className={`w-[38px] h-[21px] flex items-center justify-center ${active ? 'bg-[#c6c6c6]' : ''}`}>
      <svg width="16" height="15" viewBox="0 0 16 15" fill="none"><path d={d} stroke="#666" /></svg>
    </span>
  );
}

function StatusBar() {
  return (
    <div className="h-[21px] bg-[#f1f1f1] border-t border-[#cdcdcd] flex items-center text-[12px] text-[#555] whitespace-nowrap">
      <span className="pl-[7px] w-[164px] tracking-[.2px]">幻灯片 第 1 张，共 31 张</span>
      <svg width="15" height="14" viewBox="0 0 15 14" fill="none"><path d="M1 1h5l1 1 1-1h5M1 1v10h5M7 2v11" stroke="#777" /><path d="M9 9l5-6-1-1-5 6z" stroke="#777" /></svg>
      <div className="ml-auto flex items-center">
        <svg width="12" height="12" viewBox="0 0 12 12" fill="none" className="mr-[3px]"><path d="M6 0L3 3h6z" fill="#666" /><path d="M1 5h10M1 8h10M3 11h6" stroke="#666" /></svg>
        <span className="w-[46px]">备注</span>
        <svg width="13" height="13" viewBox="0 0 13 13" className="mr-[3px]"><path d="M0 1h13v9H7l-3 3v-3H0z" fill="#666" /></svg>
        <span className="w-[42px]">批注</span>
        <ViewIcon active d="M.5 .500h15v13H.5zM3 3h3v9H3zM8 3h5v9H8z" />
        <ViewIcon d="M1 1h5v5H1zM9 1h5v5H9zM1 9h5v5H1zM9 9h5v5H9z" />
        <ViewIcon d="M1 1h6l1 1 1-1h6v13H9l-1-1-1 1H1zM8 2v11M3 4h3M3 7h3M3 10h3M10 4h3M10 7h3M10 10h3" />
        <ViewIcon d="M1 2h14M2 2v7h12V2M8 9v3M5 13h6" />
        <span className="w-[6px] h-[2px] bg-[#666] ml-[6px]" />
        <div className="w-[100px] h-px bg-[#bdbdbd] ml-[4px] mr-[4px] relative">
          <span className="absolute left-[39px] -top-[6px] w-[3px] h-[13px] bg-[#666]" />
          <span className="absolute left-[50px] -top-[2px] w-px h-[5px] bg-[#aaa]" />
        </div>
        <span className="text-[15px] font-bold leading-[15px] text-[#666] w-[10px]">+</span>
        <span className="w-[38px] text-right">81%</span>
        <svg width="13" height="13" viewBox="0 0 13 13" fill="none" className="ml-[14px] mr-[7px]"><path d="M.5 .500h12v12H.5z" stroke="#888" /><path d="M3 5V3h2M10 5V3H8M3 8v2h2M10 8v2H8" stroke="#666" /></svg>
      </div>
    </div>
  );
}

function TaskIcon({ children, active, open, w = 'w-[48.900px]' }: { children: ReactNode; active?: boolean; open?: boolean; w?: string }) {
  return (
    <div className={`${w} h-[40px] flex items-center justify-center relative shrink-0 ${active ? 'bg-[#3a3a3a]' : ''}`}>
      {children}
      {open && <span className={`absolute bottom-0 h-[2px] bg-[#76b9ed] ${active ? 'left-0 right-0' : 'left-[4px] right-[4px]'}`} />}
    </div>
  );
}

function Taskbar() {
  return (
    <div className="h-[40px] bg-black flex items-center text-white">
      <TaskIcon w="w-[48px]">
        <svg width="16" height="16" viewBox="0 0 16 16" fill="#fff"><path d="M0 2.500l6.500-1v6H0zM7.500 1.300L16 0v7.500H7.500zM0 8.500h6.500v6l-6.500-1zM7.500 8.500H16V16l-8.500-1.300z" /></svg>
      </TaskIcon>
      <TaskIcon w="w-[48px]">
        <svg width="17" height="17" viewBox="0 0 17 17" fill="none" stroke="#fff" strokeWidth="1.200"><circle cx="10.500" cy="6.500" r="5.500" /><path d="M6.500 10.500L1 16" /></svg>
      </TaskIcon>
      <TaskIcon w="w-[48px]">
        <svg width="20" height="14" viewBox="0 0 20 14" fill="none" stroke="#fff"><path d="M5 .500h10v13H5zM2 3H.5v8H2M18 3h1.500v8H18" /></svg>
      </TaskIcon>
      <span className="w-[4.500px] shrink-0" />
      <TaskIcon>
        <svg width="24" height="24" viewBox="0 0 24 24"><rect width="24" height="24" rx="5" fill="#f2dcb8" /><rect y="20" width="24" height="4" fill="#d9534f" /><rect x="8" y="20" width="8" height="4" fill="#8bc34a" /><rect x="16" y="20" width="8" height="4" fill="#f4b400" /><path d="M5 6h14v12H5z" fill="#fff" stroke="#c15a2f" /><path d="M5 6h14v3H5zM8 3v4M16 3v4M5 12h14M5 15h14M10 9v9M14 9v9" fill="#d9763f" stroke="#c15a2f" /></svg>
      </TaskIcon>
      <TaskIcon open>
        <svg width="22" height="20" viewBox="0 0 22 20"><path d="M0 1h8l2 2h12v17H0z" fill="#f2c94c" /><path d="M0 5h22v15H0z" fill="#f8dc8a" /><path d="M6 14h10v6H6z" fill="#3a96c9" /><path d="M4 11h14v4H4z" fill="#63b4dd" /></svg>
      </TaskIcon>
      <TaskIcon>
        <svg width="24" height="24" viewBox="0 0 24 24"><circle cx="13" cy="12" r="10.500" fill="#2c2255" /><path d="M9 2C3 3 1 8 1 12s2 9 8 10C5 19 3 16 3 12s2-7 6-10z" fill="#f39c24" /><path d="M3 9h20M3 12h21M4 15h19" stroke="#e8e8f5" strokeWidth="1.300" /></svg>
      </TaskIcon>
      <TaskIcon>
        <svg width="24" height="24" viewBox="0 0 24 24"><path d="M5 1h14l4 4v14a4 4 0 01-4 4H5a4 4 0 01-4-4V5a4 4 0 014-4z" fill="#2b8cf0" /><path d="M7 15l8-9 3 3-8 9H7z" fill="#eaf4ff" /></svg>
      </TaskIcon>
      <TaskIcon>
        <svg width="22" height="26" viewBox="0 0 22 26"><ellipse cx="11" cy="11" rx="8" ry="10" fill="#111" stroke="#333" /><ellipse cx="11" cy="15" rx="5.500" ry="7" fill="#fff" /><path d="M8 8h6l-3 3z" fill="#f4b400" /><path d="M3 16c4 3 12 3 16 0l-2 4-3-1v3l-3-2-3 2 0-3-3 1z" fill="#d32f2f" /><path d="M3 24c2-2 5-2 6 0zM13 24c1-2 4-2 6 0z" fill="#f4b400" /></svg>
      </TaskIcon>
      <TaskIcon>
        <svg width="26" height="25" viewBox="0 0 26 25"><circle cx="12" cy="13" r="11.500" fill="#1f5fcb" /><path d="M25 1C17 3 8 6 5 14c4-3 7-3 9-2-4 2-6 4-7 7 6-2 11-7 18-18z" fill="#dfeaf8" /><path d="M3 18c3 5 12 6 17 0-5 3-12 3-17 0z" fill="#fff" /></svg>
      </TaskIcon>
      <TaskIcon open>
        <svg width="26" height="22" viewBox="0 0 26 22"><ellipse cx="9" cy="8" rx="9" ry="7.500" fill="#6fc04a" /><circle cx="6" cy="7" r="1.200" fill="#2b5c1e" /><circle cx="12" cy="7" r="1.200" fill="#2b5c1e" /><ellipse cx="18" cy="14" rx="8" ry="6.500" fill="#eef0ee" /><circle cx="15.500" cy="13" r="1" fill="#777" /><circle cx="20.500" cy="13" r="1" fill="#777" /></svg>
      </TaskIcon>
      <TaskIcon>
        <svg width="24" height="24" viewBox="0 0 24 24"><circle cx="12" cy="12" r="11.500" fill="#e5c12e" /><path d="M10 6v10a3.500 3.500 0 11-3-3.500M10 6c3 2 6 2 7 5-2-1-4-1-7-1" fill="#2ea665" stroke="#2ea665" strokeWidth="2" /></svg>
      </TaskIcon>
      <TaskIcon>
        <span className="w-[24px] h-[24px] rounded-[4px] bg-[#d8151d] text-white text-[10px] font-bold leading-[24px] text-center tracking-[-.5px] whitespace-nowrap overflow-hidden font-['Noto_Sans_CJK_SC',sans-serif]">有道</span>
      </TaskIcon>
      <TaskIcon>
        <svg width="24" height="24" viewBox="0 0 24 24"><path d="M12 12L8 0a12 12 0 018-.5z" fill="#a24fc9" /><path d="M12 12l5-11a12 12 0 016 6z" fill="#e04f7a" /><path d="M12 12l11-4a12 12 0 010 8z" fill="#e83a2f" /><path d="M12 12l11 4a12 12 0 01-6 7z" fill="#f4a11d" /><path d="M12 12l5 11a12 12 0 01-8 1z" fill="#f6d619" /><path d="M12 12l-3 12a12 12 0 01-7-5z" fill="#52b848" /><path d="M12 12L2 19a12 12 0 01-2-8z" fill="#2fa9a2" /><path d="M12 12L0 11a12 12 0 018-11z" fill="#2f8fe0" /><circle cx="12" cy="12" r="2.500" fill="#fff" /></svg>
      </TaskIcon>
      <TaskIcon open>
        <svg width="22" height="24" viewBox="0 0 22 24"><path d="M0 1l10 .5V11H0z" fill="#a52a20" /><path d="M12 1.500L22 0v11H12z" fill="#4c9c34" /><path d="M0 13h10v10L0 23z" fill="#b7a11f" /><path d="M12 13h10v11l-10-1z" fill="#6a33b0" /></svg>
      </TaskIcon>
      <TaskIcon open>
        <svg width="18" height="22" viewBox="0 0 18 22"><path d="M0 9h11v13H0z" fill="#eee" /><path d="M2 12h7M2 15h7M2 18h7" stroke="#555" /><path d="M8 4c0-4 8-4 8 0 0 3-4 3-4 7" fill="none" stroke="#f2e62e" strokeWidth="2.200" /><circle cx="12" cy="14" r="1.300" fill="#f2e62e" /></svg>
      </TaskIcon>
      <TaskIcon active open>
        <svg width="24" height="24" viewBox="0 0 24 24"><rect x="9" y="2" width="15" height="20" fill="#f3f3f3" /><path d="M14 6h7M14 10h7M14 14h7M14 18h7" stroke="#d24726" strokeWidth="1.500" /><path d="M0 3l14-2.500v23L0 21z" fill="#d24726" /><path d="M5 17V7h3a3 3 0 010 6H5" fill="none" stroke="#fff" strokeWidth="1.800" /></svg>
      </TaskIcon>
      <TaskIcon open>
        <svg width="24" height="24" viewBox="0 0 24 24"><path d="M2 3h18v20H2z" fill="#d6e8c6" /><path d="M2 3h18v3H2z" fill="#eeeeee" /><path d="M2 19h18v4H2z" fill="#6cbb4a" /><path d="M6 8v9M9 8v9M12 11h4" stroke="#333" strokeWidth="1.300" /><path d="M15 14L23 1l1 1-8 13z" fill="#e5b53c" /></svg>
      </TaskIcon>
      <div className="ml-auto flex items-center h-full">
        <svg width="16" height="16" viewBox="0 0 16 16" fill="none" stroke="#fff" className="mr-[23px]"><circle cx="10" cy="4.500" r="3" /><path d="M6 15c0-2 1-5 4-5s4 2 5 5" /><circle cx="4.500" cy="8" r="2.500" /><path d="M.5 15c0-2 1-4 4-4" /></svg>
        <svg width="12" height="7" viewBox="0 0 12 7" fill="none" stroke="#fff" className="mr-[8px]"><path d="M.5 6.500L6 1l5.500 5.500" /></svg>
        <svg width="16" height="16" viewBox="0 0 16 16" className="mr-[9px]"><rect width="16" height="14" fill="#6d3b8f" /><path d="M3 3h3M8 3h3" stroke="#fff" strokeWidth="2" /><path d="M3 8h7l3-2v5l-3-2H3z" fill="#fff" /><circle cx="3.500" cy="12.500" r="3.500" fill="#e42121" /></svg>
        <svg width="16" height="16" viewBox="0 0 16 16" className="mr-[10px]"><circle cx="8" cy="8" r="8" fill="#b5c91c" /><path d="M7 3h2.500v3.500H13V9H9.500v4H7V9H3V6.500h4z" fill="#1c4a11" /></svg>
        <svg width="15" height="11" viewBox="0 0 15 11" fill="none" stroke="#fff" className="mr-[9px]"><path d="M0 2h3M0 6h3M3 1h1v6H3M5 4h9v6H5" /><path d="M6 5h6v4H6z" fill="#fff" stroke="none" /></svg>
        <svg width="15" height="15" viewBox="0 0 15 15" fill="none" stroke="#777" className="mr-[7px]"><path d="M1 9c3-3 6-5 9-6M4 11c2-2 4-3 6-4M7 13c1-1 2-2 3-2" /><path d="M1 1l2 2M3 1L1 3" stroke="#ddd" /><circle cx="10" cy="13" r="1" fill="#ddd" stroke="none" /></svg>
        <svg width="16" height="14" viewBox="0 0 16 14" fill="none" stroke="#fff" className="mr-[8px]"><path d="M1 5h3l4-4v12L4 9H1z" /><path d="M10 4c1 2 1 4 0 6M13 2c2 3 2 7 0 10" stroke="#aaa" /></svg>
        <span className="text-[14px] font-bold w-[14px] mr-[14px] font-['Noto_Sans_CJK_SC',sans-serif]">中</span>
        <svg width="16" height="16" viewBox="0 0 16 16" className="mr-[17px]"><path d="M1 2l14-2 1 13-14 3z" fill="#e95a20" /><path d="M12 5c-2-1-7-1-7 1.500S11 8 11 10.500 6 12 4 11" fill="none" stroke="#fff" strokeWidth="2" /></svg>
        <div className="w-[60px] text-center text-[12px] leading-[18px] mr-[11px] font-['Open_Sans',sans-serif]">
          <div>19:07</div>
          <div>2018/9/18</div>
        </div>
      </div>
    </div>
  );
}

export default function App() {
  return (
    <div className="w-[1280px] h-[1024px] overflow-hidden flex flex-col bg-[#e2e2e2] font-['Open_Sans','Noto_Sans_CJK_SC',sans-serif]">
      <TitleBar />
      <TabBar />
      <Ribbon />
      <div className="h-[810px] flex">
        <ThumbPanel />
        <EditorArea />
      </div>
      <StatusBar />
      <Taskbar />
    </div>
  );
}
